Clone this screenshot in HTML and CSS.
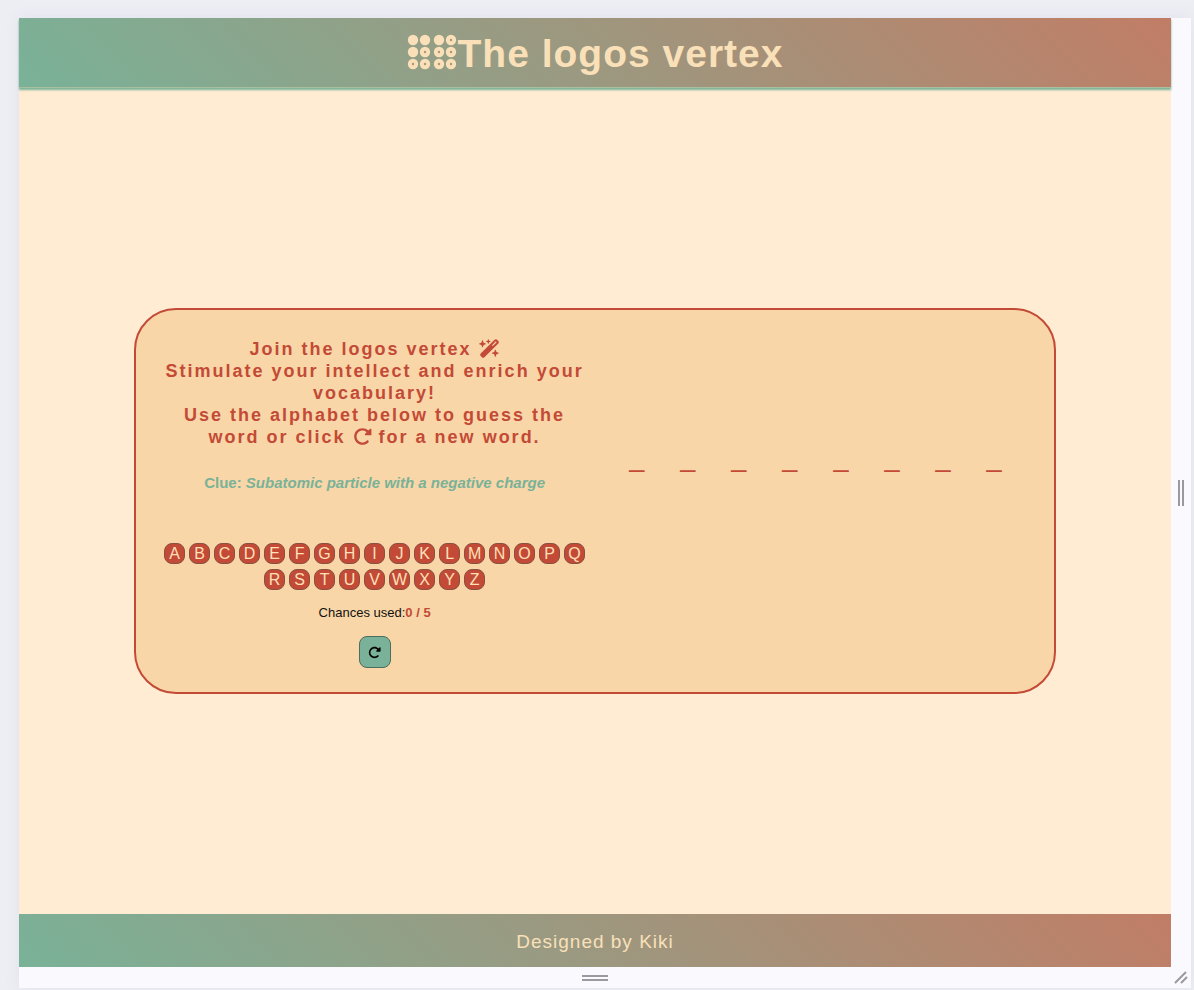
FILE: index.html
```html
<!DOCTYPE html>
<html lang="en">
<head>
<meta charset="utf-8">
<title>The logos vertex</title>
<link rel="stylesheet" href="styles.css">
</head>
<body>
<svg class="defs" aria-hidden="true">
  <symbol id="rotate" viewBox="0 0 512 512"><path d="M463.5 224H472c13.3 0 24-10.7 24-24V72c0-9.7-5.8-18.5-14.8-22.2s-19.3-1.7-26.2 5.2L413.4 96.6c-87.6-86.5-228.7-86.2-315.8 1c-87.5 87.5-87.5 229.3 0 316.8s229.3 87.5 316.8 0c12.5-12.5 12.5-32.8 0-45.3s-32.8-12.5-45.3 0c-62.5 62.5-163.8 62.5-226.3 0s-62.5-163.8 0-226.3c62.2-62.2 162.7-62.5 225.3-1L327 183c-6.9 6.9-8.9 17.2-5.2 26.2s12.5 14.8 22.2 14.8H463.5z"/></symbol>
</svg>
<div class="viewport">
  <div class="page">
    <header class="header">
      <h1 class="title">
        <svg class="braille" viewBox="0 0 50 36" aria-hidden="true">
          <g class="dots">
            <circle cx="6" cy="6" r="5.2"/><circle cx="18" cy="6" r="5.2"/><circle cx="32" cy="6" r="5.2"/><circle cx="44" cy="6" r="5.2"/>
            <circle cx="6" cy="18" r="5.2"/><circle cx="18" cy="18" r="5.2"/><circle cx="32" cy="18" r="5.2"/><circle cx="44" cy="18" r="5.2"/>
            <circle cx="6" cy="30" r="5.2"/><circle cx="18" cy="30" r="5.2"/><circle cx="32" cy="30" r="5.2"/><circle cx="44" cy="30" r="5.2"/>
          </g>
          <g class="holes">
            <circle cx="44" cy="6" r="1.2"/>
            <circle cx="18" cy="18" r="1.2"/><circle cx="32" cy="18" r="1.2"/><circle cx="44" cy="18" r="1.2"/>
            <circle cx="6" cy="30" r="1.2"/><circle cx="18" cy="30" r="1.2"/><circle cx="32" cy="30" r="1.2"/><circle cx="44" cy="30" r="1.2"/>
          </g>
        </svg><span>The logos vertex</span>
      </h1>
    </header>
    <main class="main">
      <section class="card">
        <div class="panel">
          <h2 class="intro">Join the logos vertex <svg class="wand" viewBox="0 0 576 512" aria-hidden="true"><path d="M234.7 42.7L197 56.8c-3 1.1-5 4-5 7.2s2 6.1 5 7.2l37.7 14.1L248.8 123c1.1 3 4 5 7.2 5s6.1-2 7.2-5l14.1-37.7L315 71.2c3-1.1 5-4 5-7.2s-2-6.1-5-7.2L277.3 42.7 263.2 5c-1.1-3-4-5-7.2-5s-6.1 2-7.2 5L234.7 42.7zM46.1 395.4c-18.7 18.7-18.7 49.1 0 67.9l34.6 34.6c18.7 18.7 49.1 18.7 67.9 0L529.9 116.5c18.7-18.7 18.7-49.1 0-67.9L495.3 14.1c-18.7-18.7-49.1-18.7-67.9 0L46.1 395.4zM484.6 82.6l-105 105-23.3-23.3 105-105 23.3 23.3zM7.5 117.2C3 118.9 0 123.2 0 128s3 9.1 7.5 10.8L64 160l21.2 56.5c1.7 4.5 6 7.5 10.8 7.5s9.1-3 10.8-7.5L128 160l56.5-21.2c4.5-1.7 7.5-6 7.5-10.8s-3-9.1-7.5-10.8L128 96 106.8 39.5C105.1 35 100.8 32 96 32s-9.1 3-10.8 7.5L64 96 7.5 117.2zm352 256c-4.5 1.7-7.5 6-7.5 10.8s3 9.1 7.5 10.8L416 416l21.2 56.5c1.7 4.5 6 7.5 10.8 7.5s9.1-3 10.8-7.5L480 416l56.5-21.2c4.5-1.7 7.5-6 7.5-10.8s-3-9.1-7.5-10.8L480 352l-21.2-56.5c-1.7-4.5-6-7.5-10.8-7.5s-9.1 3-10.8 7.5L416 352l-56.5 21.2z"/></svg><br>Stimulate your intellect and enrich your vocabulary!<br>Use the alphabet below to guess the word or click <svg class="again" aria-hidden="true"><use href="#rotate"/></svg> for a new word.</h2>
          <p class="clue">Clue: <em>Subatomic particle with a negative charge</em></p>
          <div class="letters">
            <button class="key">A</button><button class="key">B</button><button class="key">C</button><button class="key">D</button><button class="key">E</button><button class="key">F</button><button class="key">G</button><button class="key">H</button><button class="key">I</button><button class="key">J</button><button class="key">K</button><button class="key">L</button><button class="key">M</button><button class="key">N</button><button class="key">O</button><button class="key">P</button><button class="key">Q</button><button class="key">R</button><button class="key">S</button><button class="key">T</button><button class="key">U</button><button class="key">V</button><button class="key">W</button><button class="key">X</button><button class="key">Y</button><button class="key">Z</button>
          </div>
          <p class="chances">Chances used:<b>0 / 5</b></p>
          <button class="reset" aria-label="New word"><svg class="reset-icon" aria-hidden="true"><use href="#rotate"/></svg></button>
        </div>
        <div class="word"><span>_</span><span>_</span><span>_</span><span>_</span><span>_</span><span>_</span><span>_</span><span>_</span></div>
      </section>
    </main>
    <footer class="footer">Designed by Kiki</footer>
  </div>
  <div class="handle side"><svg width="6" height="26" viewBox="0 0 6 26"><path d="M1 0V26M5 0V26"/></svg></div>
  <div class="handle bottom"><svg width="26" height="6" viewBox="0 0 26 6"><path d="M0 1H26M0 5H26"/></svg></div>
  <div class="handle corner"><svg width="14" height="14" viewBox="0 0 14 14"><path d="M1 12L12 1M7 12L13 6"/></svg></div>
</div>
</body>
</html>
```
FILE: styles.css
```css
* {
  box-sizing: border-box;
}

body {
  margin: 0;
  min-height: 100vh;
  display: flex;
  padding: 18px 3px 2px 19px;
  background: #ededf4;
  font-family: "Liberation Sans", Arial, sans-serif;
}

.defs {
  position: absolute;
  width: 0;
  height: 0;
}

.viewport {
  flex: 1;
  display: grid;
  grid-template-columns: 1fr 20px;
  grid-template-rows: 1fr 21px;
  background: #f9f9fe;
  box-shadow: 0 0 14px #e2e2ec;
}

.page {
  display: flex;
  flex-direction: column;
  background: #ffecd2;
}

.header,
.footer {
  display: flex;
  align-items: center;
  justify-content: center;
  background: linear-gradient(45deg, #79b298, #c17d66);
  color: #f9e0b9;
}

.header {
  height: 70px;
  padding-top: 2px;
  border-bottom: 1px solid #a9c0a0;
  box-shadow: 0 2px 2px #79b298;
}

.title {
  display: flex;
  align-items: center;
  gap: 1px;
  margin: 0;
  font-size: 39px;
  letter-spacing: 1px;
}

.braille {
  width: 50px;
  height: 36px;
  margin-bottom: 4px;
}

.dots {
  fill: #f9e0b9;
}

.holes {
  fill: #ad9872;
}

.main {
  flex: 1;
  display: flex;
  align-items: center;
  justify-content: center;
}

.card {
  width: 80%;
  display: grid;
  grid-template-columns: 1fr 1fr;
  gap: 4px;
  padding: 28px 20px 24px;
  border: 2px solid #c34a36;
  border-radius: 42px;
  background: #f9d6a8;
}

.panel {
  display: flex;
  flex-direction: column;
  align-items: center;
  text-align: center;
}

.intro {
  margin: 0;
  padding: 0 8px;
  font-size: 18px;
  line-height: 22px;
  letter-spacing: 2px;
  color: #c34a36;
}

.wand {
  width: 21px;
  height: 19px;
  fill: #c34a36;
  vertical-align: -3px;
}

.again {
  width: 19px;
  height: 19px;
  fill: #c34a36;
  vertical-align: -3px;
}

.clue {
  margin: 26px 0 51px;
  font-size: 15px;
  line-height: 18px;
  font-weight: bold;
  color: #79b298;
}

.letters {
  display: flex;
  flex-wrap: wrap;
  justify-content: center;
  gap: 5px 4px;
}

.key {
  width: 21px;
  height: 21px;
  padding: 0;
  border: 1px solid #8a5142;
  border-radius: 8px;
  background: #c34a36;
  color: #ffe0b8;
  font: 16px/18px "Liberation Sans", Arial, sans-serif;
}

.chances {
  margin: 15px 0 15px;
  font-size: 13px;
  line-height: 16px;
  color: #111;
}

.chances b {
  color: #c34a36;
}

.reset {
  display: grid;
  place-items: center;
  width: 32px;
  height: 32px;
  padding: 0;
  border: 1px solid #4e6c60;
  border-radius: 8px;
  background: #79b298;
}

.reset-icon {
  width: 13px;
  height: 13px;
}

.word {
  display: flex;
  align-items: center;
  justify-content: center;
  gap: 36px;
  padding-bottom: 92px;
  font-size: 27px;
  color: #c34a36;
}

.footer {
  height: 53px;
  padding-top: 2px;
  font-size: 19px;
  letter-spacing: 1px;
}

.handle {
  display: grid;
  place-items: center;
}

.handle path {
  fill: none;
  stroke: #9a9a9e;
  stroke-width: 2;
}
```
